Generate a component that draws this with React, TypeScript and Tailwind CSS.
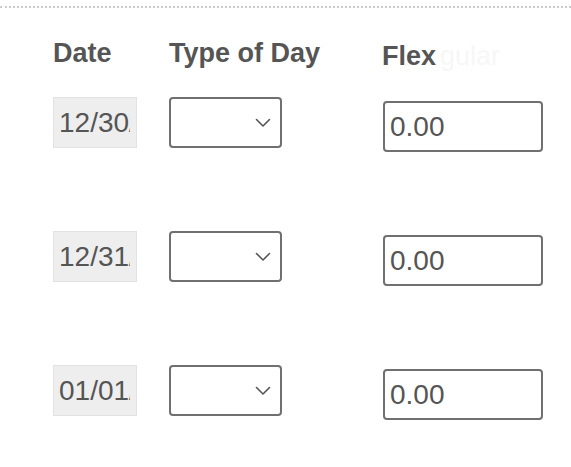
import React from "react";

const rows = ["12/30/2024", "12/31/2024", "01/01/2025"];

function Chevron() {
  return (
    <svg width="16" height="10" viewBox="0 0 16 10" fill="none">
      <path d="M1.5 1.5 L8 8 L14.5 1.5" stroke="#555555" strokeWidth="1.6" strokeLinecap="round" strokeLinejoin="round" />
    </svg>
  );
}

export default function App() {
  return (
    <div className="w-[571px] h-[467px] bg-white overflow-hidden font-['Liberation_Sans',Arial,sans-serif]">
      <div className="mt-[6px] border-t-2 border-dotted border-[#cccccc]" />
      <div className="pl-[53px] pt-[30px]">
        <div className="flex items-start h-[31px] leading-[31px] text-[27px] font-bold text-[#555555]">
          <div className="w-[116px]">Date</div>
          <div className="w-[213px]">Type of Day</div>
          <div className="pt-[3px] flex">
            <span>Flex</span>
            <span className="pl-[4px] font-normal text-[#f7f7f7]">gular</span>
          </div>
        </div>
        <div className="mt-[28px] flex flex-col gap-[79px]">
          {rows.map((d) => (
            <div key={d} className="flex items-start h-[55px]">
              <div className="w-[116px]">
                <div className="w-[84px] h-[51px] bg-[#eeeeee] border border-[#e2e2e2] pl-[5px] pr-[6px] flex items-center">
                  <div className="w-full overflow-hidden whitespace-nowrap text-[28px] leading-none text-[#555555]">{d}</div>
                </div>
              </div>
              <div className="w-[214px]">
                <div className="w-[113px] h-[51px] border-2 border-[#707070] rounded-[4px] bg-white flex items-center justify-end pr-[9px]">
                  <Chevron />
                </div>
              </div>
              <div className="mt-[4px]">
                <div className="w-[160px] h-[51px] border-2 border-[#707070] rounded-[4px] bg-white flex items-center pl-[5px] text-[28px] leading-none text-[#555555]">
                  0.00
                </div>
              </div>
            </div>
          ))}
        </div>
      </div>
    </div>
  );
}
